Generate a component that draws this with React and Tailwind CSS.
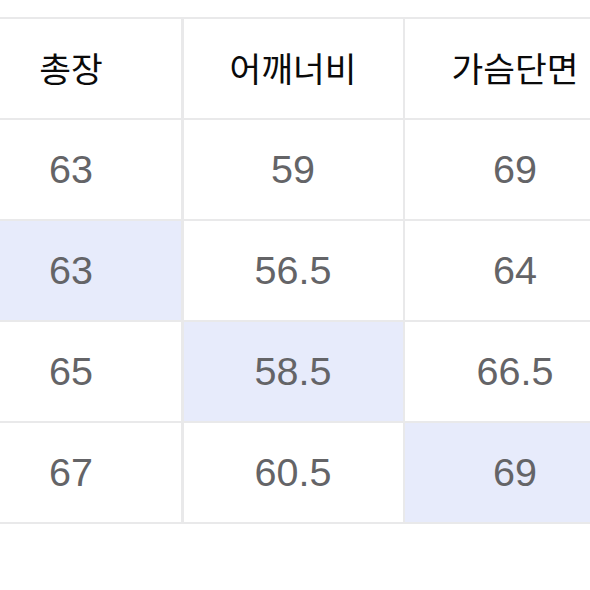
import React from 'react';

const rows = [
    ['63', '59', '69'],
    ['63', '56.5', '64'],
    ['65', '58.5', '66.5'],
    ['67', '60.5', '69'],
];

// which cell in each row is highlighted (-1 = none)
const marked = [-1, 0, 1, 2];

const headers = ['총장', '어깨너비', '가슴단면'];

const App = () => {
    return (
        <div className="w-[590px] h-[590px] bg-white overflow-hidden">
            <div className="mt-[17px] -ml-[39px] w-[664px] bg-[#e9e9ea] py-[2px] grid grid-cols-[220px_219px_220px] gap-x-[2.5px] gap-y-[2.5px]">
                {headers.map((h) => (
                    <div key={h} className="h-[98.5px] bg-white flex items-center justify-center text-[34.5px] font-normal text-[#0a0a0a] font-['Noto_Sans_CJK_KR',sans-serif] pb-[1px]">
                        {h}
                    </div>
                ))}
                {rows.map((row, ri) =>
                    row.map((val, ci) => (
                        <div
                            key={`${ri}-${ci}`}
                            className={`h-[98.5px] flex items-center justify-center text-[39.5px] text-[#646467] font-['Liberation_Sans',Arial,sans-serif] ${marked[ri] === ci ? 'bg-[#e7ebfb]' : 'bg-white'}`}
                        >
                            {val}
                        </div>
                    ))
                )}
            </div>
        </div>
    );
};

export default App;
